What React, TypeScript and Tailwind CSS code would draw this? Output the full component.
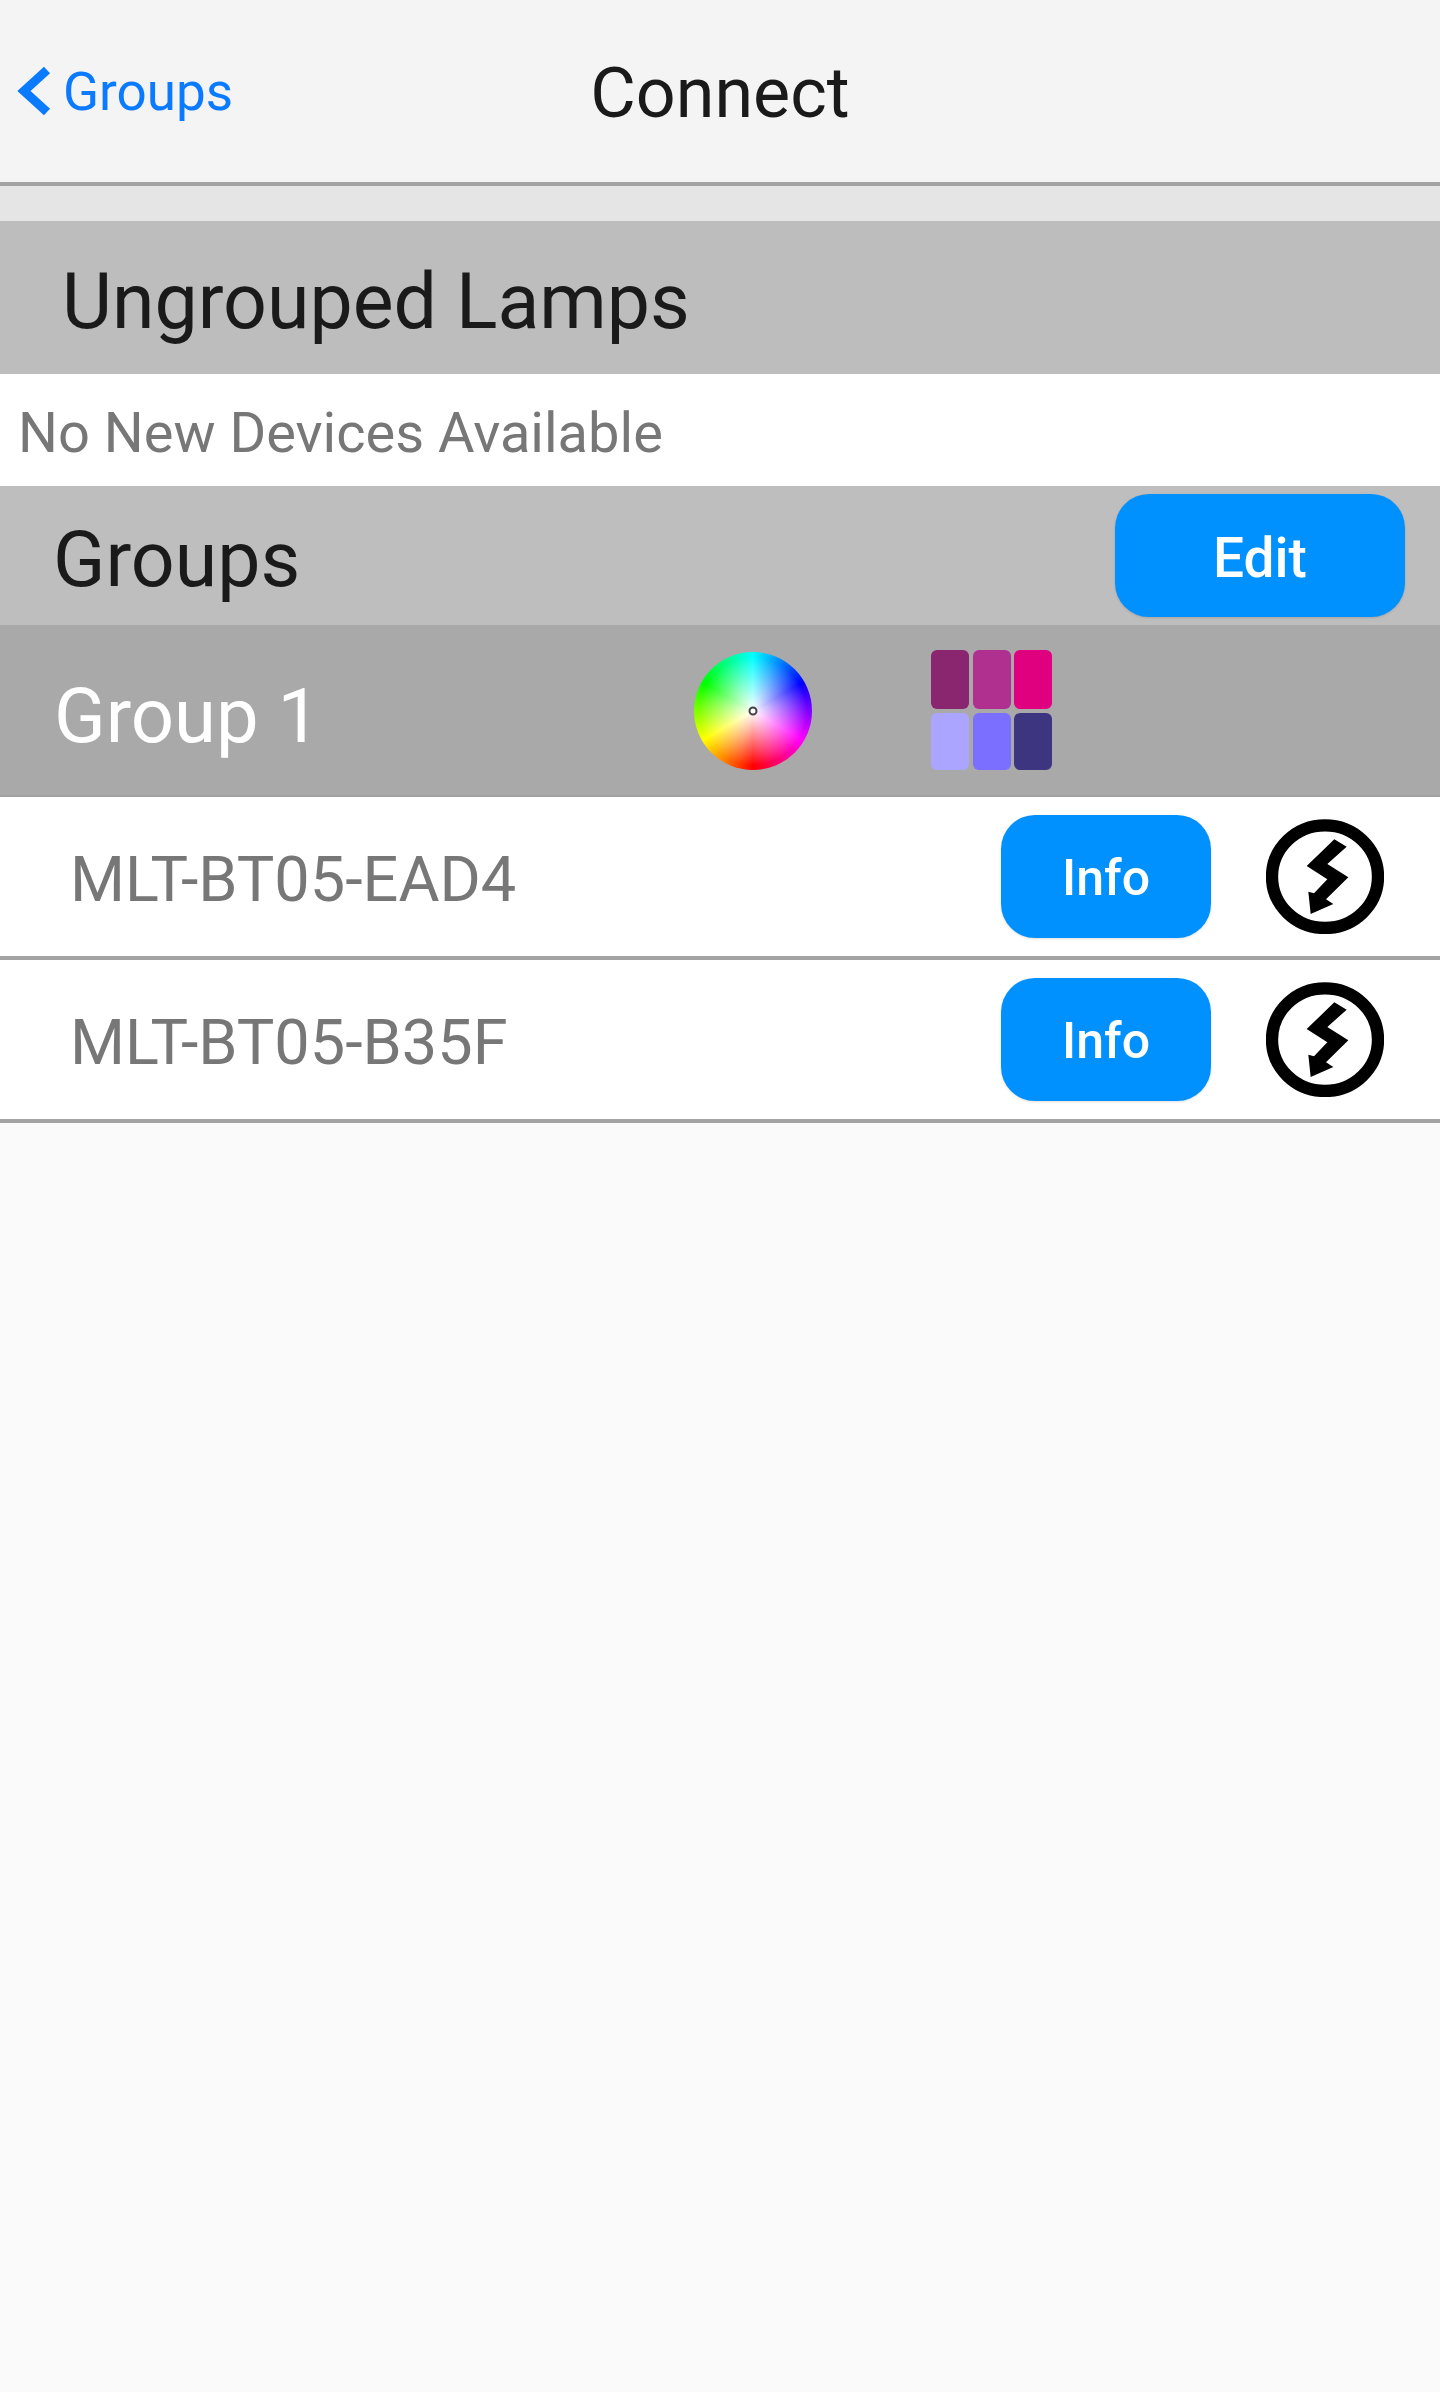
const font = "font-['Roboto',sans-serif]";

const BoltIcon = () => (
  <svg viewBox="78 57 354 345" className="w-[118px] h-[115px] shrink-0">
    <ellipse cx="255" cy="230" rx="159" ry="154" fill="none" stroke="#000" strokeWidth="37" />
    <polygon
      points="283,118 320,140 262,192 325,232 258,298 280,312 212,342 205,275 222,280 262,238 200,198"
      fill="#000"
    />
  </svg>
);

const swatches = ['bg-[#8a2570]', 'bg-[#b03090]', 'bg-[#e0007f]', 'bg-[#aca5ff]', 'bg-[#7b6fff]', 'bg-[#3d3580]'];

const LampRow = ({ name }: { name: string }) => (
  <div className="flex h-[163px] items-center justify-between border-b-4 border-[#a3a3a3] bg-white pl-[70px] pr-[56px]">
    <span className="pt-[5px] text-[63px] leading-none text-[#777777]">{name}</span>
    <div className="flex items-center gap-[55px]">
      <button className="flex h-[123px] w-[210px] items-center justify-center rounded-[34px] bg-[#0091ff] pt-[4px] text-[50px] font-medium text-white shadow-sm">
        Info
      </button>
      <BoltIcon />
    </div>
  </div>
);

export default function App() {
  return (
    <div className={`min-h-[2392px] bg-[#fafafa] ${font}`}>
      <div className="grid h-[186px] grid-cols-[1fr_auto_1fr] items-center border-b-4 border-[#a3a3a3] bg-[#f4f4f4]">
        <div className="flex items-center text-[#0a7aff]">
          <svg viewBox="0 0 48 60" className="ml-[14px] h-[60px] w-[48px] shrink-0">
            <polyline points="33,9 10,30 33,51" fill="none" stroke="currentColor" strokeWidth="9" />
          </svg>
          <span className="ml-[1px] pt-[2px] text-[53px] leading-none">Groups</span>
        </div>
        <h1 className="pt-[3px] text-[70px] font-normal leading-none text-[#1a1a1a]">Connect</h1>
        <div />
      </div>
      <div className="h-[35px] bg-[#e5e5e5]" />
      <div className="flex h-[153px] items-center bg-[#bdbdbd] pl-[62px] pt-[9px] text-[77px] leading-none text-[#1a1a1a]">
        Ungrouped Lamps
      </div>
      <div className="flex h-[112px] items-center bg-white pl-[18px] pt-[5px] text-[56px] leading-none text-[#777777]">
        No New Devices Available
      </div>
      <div className="flex h-[139px] items-center justify-between bg-[#bebebe] pl-[53px] pr-[35px]">
        <span className="pt-[9px] text-[77px] leading-none text-[#1a1a1a]">Groups</span>
        <button className="flex h-[123px] w-[290px] items-center justify-center rounded-[34px] bg-[#0091ff] pt-[5px] text-[55px] font-medium text-white shadow-sm">
          Edit
        </button>
      </div>
      <div className="flex h-[172px] items-center border-b-2 border-[#a0a0a0] bg-[#a9a9a9] pl-[54px]">
        <span className="w-[640px] pt-[11px] text-[76px] leading-none text-white">Group 1</span>
        <div className="relative mt-[1px] h-[118px] w-[118px] rounded-full bg-[radial-gradient(circle_closest-side,#ffffff_0%,#ffffff00_92%),conic-gradient(#00ffff,#0000ff_60deg,#ff00ff_120deg,#ff0000_180deg,#ffff00_240deg,#00ff00_300deg,#00ffff)]">
          <div className="absolute left-1/2 top-1/2 h-[9px] w-[9px] -translate-x-1/2 -translate-y-1/2 rounded-full border-2 border-[#444444]" />
        </div>
        <div className="ml-[119px] -mt-[1px] grid grid-cols-[repeat(3,38px)] grid-rows-[59px_57px] gap-x-[3.5px] gap-y-[4px]">
          {swatches.map((c) => (
            <div key={c} className={`rounded-[6px] ${c}`} />
          ))}
        </div>
      </div>
      <LampRow name="MLT-BT05-EAD4" />
      <LampRow name="MLT-BT05-B35F" />
    </div>
  );
}
